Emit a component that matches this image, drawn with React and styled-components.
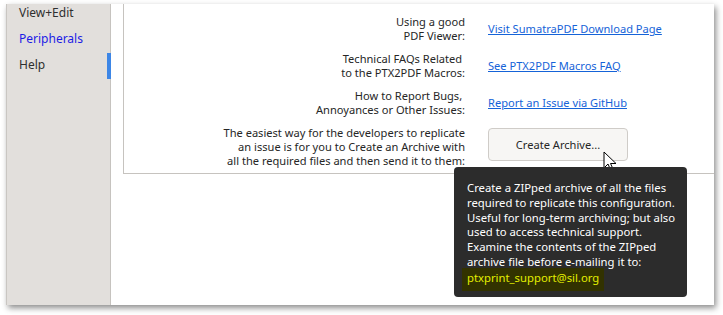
import React from 'react';
import styled, { createGlobalStyle } from 'styled-components';

const Global = createGlobalStyle`
  html, body { margin: 0; padding: 0; background: #ffffff; }
  body { width: 723px; height: 315px; overflow: hidden; font-family: "Noto Sans", "Open Sans", sans-serif; }
`;

const Page = styled.div`
  width: 723px;
  height: 315px;
  padding: 4px 0 0 6px;
  box-sizing: border-box;
`;

const Window = styled.div`
  position: relative;
  display: flex;
  width: 708px;
  height: 301px;
  background: #ffffff;
  box-shadow: 2px 3px 6px rgba(0, 0, 0, 0.45);
  border-left: 1px solid #c9c6c2;
  box-sizing: border-box;
`;

const Sidebar = styled.nav`
  width: 104px;
  flex-shrink: 0;
  background: #e2dfdc;
  border-right: 1px solid #c6c3bf;
  box-sizing: border-box;
  position: relative;
  padding: 1px 0 0 12px;
`;

const NavItem = styled.div`
  height: 26px;
  line-height: 16px;
  font-size: 12px;
  color: ${p => (p.active ? '#1c1ce6' : '#2f2f2f')};
`;

const Indicator = styled.div`
  position: absolute;
  right: -1px;
  top: 49px;
  width: 4px;
  height: 26px;
  background: #3d86e6;
`;

const Main = styled.main`
  flex: 1;
  padding-left: 12px;
`;

const Frame = styled.section`
  height: 170px;
  border-left: 1px solid #c6c3bf;
  border-bottom: 1px solid #c6c3bf;
  box-sizing: border-box;
  padding: 11px 0 0 0;
  display: grid;
  grid-template-columns: 341px 1fr;
  column-gap: 23px;
  row-gap: 9px;
  align-items: center;
  align-content: start;
`;

const Label = styled.div`
  text-align: right;
  font-size: 11.1px;
  line-height: 14px;
  color: #262626;
  white-space: pre;
`;

const LinkText = styled.a`
  font-size: 11.1px;
  line-height: 14px;
  color: #1563d8;
  text-decoration: underline;
  justify-self: start;
  cursor: pointer;
`;

const Button = styled.button`
  justify-self: start;
  width: 140px;
  height: 33px;
  margin-top: -5px;
  background: #f7f6f4;
  border: 1px solid #cfccc8;
  border-radius: 4px;
  font-family: "Noto Sans", "Open Sans", sans-serif;
  font-size: 11.1px;
  color: #262626;
  padding: 0;
`;

const Cursor = styled.svg`
  position: absolute;
  left: 596px;
  top: 147px;
`;

const Tooltip = styled.div`
  position: absolute;
  left: 447px;
  top: 163px;
  width: 233px;
  height: 130px;
  background: #2c2c2c;
  border-radius: 4px;
  padding: 14px 0 0 13px;
  box-sizing: border-box;
  color: #ffffff;
  font-size: 11.3px;
  line-height: 14.8px;
`;

const Email = styled.div`
  display: inline-block;
  margin: -2px 0 0 -5px;
  padding: 3px 5px 5px 5px;
  background: #323200;
  color: #e2ee00;
`;

const rows = [
  { label: 'Using a good\nPDF Viewer:', link: 'Visit SumatraPDF Download Page' },
  { label: 'Technical FAQs Related \nto the PTX2PDF Macros:', link: 'See PTX2PDF Macros FAQ' },
  { label: 'How to Report Bugs, \nAnnoyances or Other Issues:', link: 'Report an Issue via GitHub' },
];

export default function App() {
  return (
    <Page>
      <Global />
      <Window>
        <Sidebar>
          <NavItem>View+Edit</NavItem>
          <NavItem active>Peripherals</NavItem>
          <NavItem>Help</NavItem>
          <Indicator />
        </Sidebar>
        <Main>
          <Frame>
            {rows.map((r, i) => (
              <React.Fragment key={i}>
                <Label>{r.label}</Label>
                <LinkText>{r.link}</LinkText>
              </React.Fragment>
            ))}
            <Label>{'The easiest way for the developers to replicate\nan issue is for you to Create an Archive with\nall the required files and then send it to them:'}</Label>
            <Button>Create Archive...</Button>
          </Frame>
        </Main>
        <Cursor width="14" height="22" viewBox="0 0 14 22">
          <path d="M1 1 L1 17 L5 13 L8 20 L10.5 19 L7.5 12.5 L13 12.5 Z" fill="#ffffff" stroke="#000000" strokeWidth="1" strokeLinejoin="miter" />
        </Cursor>
        <Tooltip>
          Create a ZIPped archive of all the files<br />
          required to replicate this configuration.<br />
          Useful for long-term archiving; but also<br />
          used to access technical support.<br />
          Examine the contents of the ZIPped<br />
          archive file before e-mailing it to:<br />
          <Email>ptxprint_support@sil.org</Email>
        </Tooltip>
      </Window>
    </Page>
  );
}
